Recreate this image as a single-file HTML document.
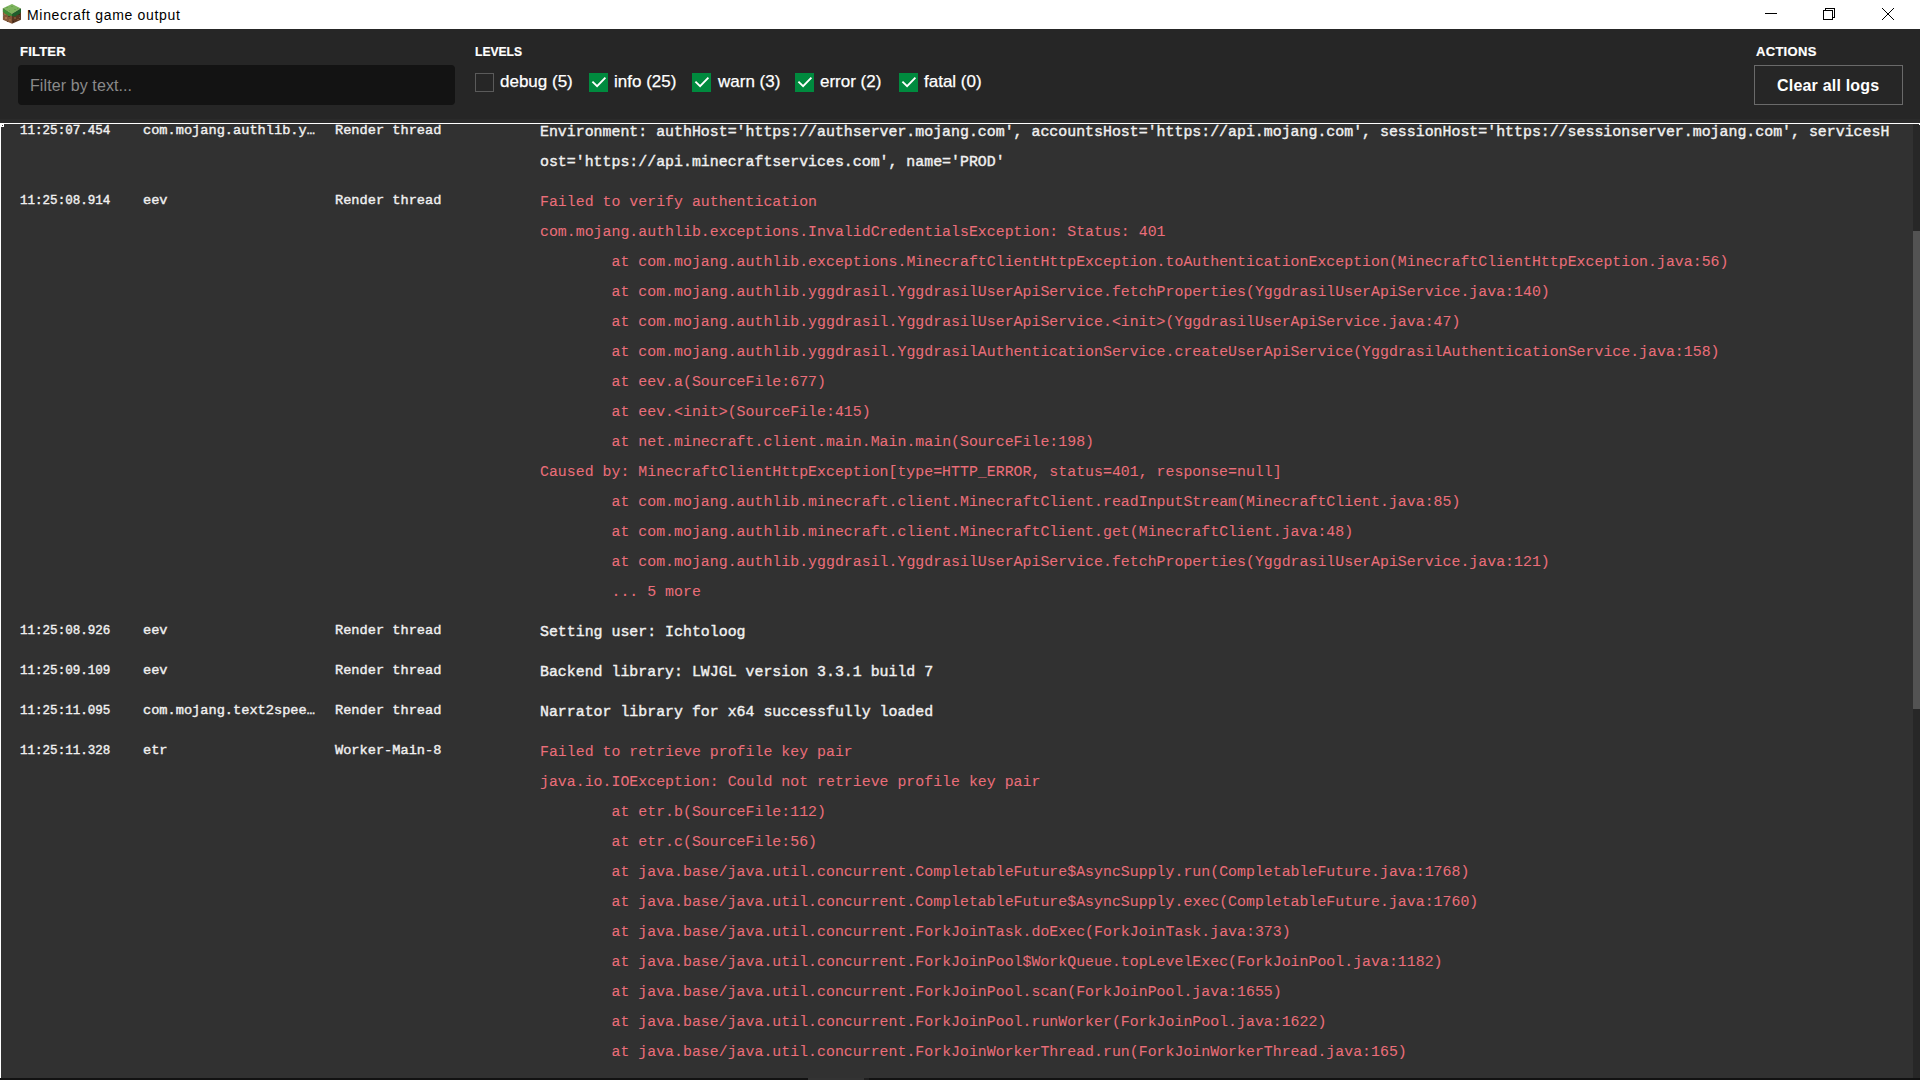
<!DOCTYPE html>
<html><head><meta charset="utf-8">
<style>
*{box-sizing:border-box}
html,body{margin:0;padding:0;width:1920px;height:1080px;overflow:hidden;background:#313131;font-family:"Liberation Sans",sans-serif}
#title{position:absolute;left:0;top:0;width:1920px;height:29px;background:#fff}
#title .t{position:absolute;left:27px;top:7px;font-size:14px;letter-spacing:0.68px;color:#000;white-space:nowrap}
#title svg{position:absolute}
#hdr{position:absolute;left:0;top:29px;width:1920px;height:94px;background:#262626}
.lbl{position:absolute;font-weight:bold;font-size:13px;color:#fff;white-space:nowrap;-webkit-text-stroke:0.2px #fff}
#inp{position:absolute;left:18px;top:36px;width:437px;height:40px;background:#131313;border-radius:4px}
#inp span{position:absolute;left:12px;top:12px;letter-spacing:0.1px;font-size:16px;color:#8a8a8a;white-space:nowrap}
.cb{position:absolute;top:44px;width:19px;height:19px;background:#008a3e}
.cb.off{background:transparent;border:1px solid #5a5a5a;width:19px;height:19px}
.cb svg{position:absolute;left:0;top:0}
.cbl{position:absolute;top:43px;font-size:17px;color:#fff;white-space:nowrap;-webkit-text-stroke:0.25px #fff}
#btn{position:absolute;left:1754px;top:36px;width:149px;height:40px;border:1px solid #6a6a6a}
#btn span{position:absolute;left:22px;top:11px;letter-spacing:0.2px;font-weight:bold;font-size:16px;color:#fff;white-space:nowrap}
#log{position:absolute;left:0;top:123px;width:1920px;height:955px;background:#313131;border-top:1px solid #fff;border-left:1px solid #fff;overflow:hidden}
#list{position:absolute;left:-1px;top:-12px;width:1913px}
.e{position:relative;padding:5px 0}
.c{position:absolute;top:5px;font-family:"Liberation Mono",monospace;-webkit-text-stroke:0.4px #f0f0f0;font-size:13.65px;line-height:27px;color:#f0f0f0;white-space:pre}
.ts{left:20px;top:6px;font-size:12.55px}.lg{left:143px}.th{left:335px}
.m{margin-left:540px;font-family:"Liberation Mono",monospace;font-size:14.9px;line-height:30px;white-space:pre;color:#f0f0f0;-webkit-text-stroke:0.4px #f0f0f0}
.m.r{color:#ea6e7a;-webkit-text-stroke:0.05px #ea6e7a}
#vs{position:absolute;left:1913px;top:124px;width:7px;height:954px;background:#272727}
#vt{position:absolute;left:1913px;top:231px;width:7px;height:478px;background:#535353}
#hs{position:absolute;left:0;top:1078px;width:1920px;height:2px;background:#121212}
#ht{position:absolute;left:808px;top:1078px;width:56px;height:2px;background:#333}
</style></head><body>
<div id="title">
<svg style="left:0;top:0" width="24" height="28" viewBox="0 0 24 28">
<defs><clipPath id="cl"><polygon points="2.9,8.2 12,14 12,23.7 2.9,19.8"/></clipPath><clipPath id="cr"><polygon points="21,8.4 12,14 12,23.7 21,19.8"/></clipPath><clipPath id="ct"><polygon points="12,4 21,8.4 12,14 2.9,8.2"/></clipPath></defs>
<polygon points="12,4 21,8.4 12,14 2.9,8.2" fill="#7db45e"/>
<polygon points="2.9,8.2 12,14 12,23.7 2.9,19.8" fill="#84583a"/>
<polygon points="21,8.4 12,14 12,23.7 21,19.8" fill="#5a3822"/>
<g clip-path="url(#ct)" fill="#6ba34e"><rect x="6" y="7" width="2" height="1"/><rect x="11" y="6" width="2" height="1"/><rect x="14" y="9" width="2" height="1"/><rect x="9" y="10" width="1" height="1"/><rect x="17" y="8" width="1" height="1"/></g>
<g clip-path="url(#cl)"><rect x="4" y="13" width="2" height="2" fill="#a06b44"/><rect x="8" y="16" width="2" height="1" fill="#5b3a22"/><rect x="5" y="17" width="2" height="2" fill="#a87350"/><rect x="9" y="19" width="2" height="2" fill="#9a6640"/><rect x="3" y="15" width="1" height="1" fill="#6b6b6b"/><rect x="7" y="21" width="1" height="1" fill="#5b3a22"/></g>
<g clip-path="url(#cr)"><rect x="14" y="17" width="2" height="2" fill="#7d5132"/><rect x="18" y="14" width="2" height="1" fill="#3d2414"/><rect x="17" y="19" width="2" height="1" fill="#7a4e30"/><rect x="13" y="21" width="1" height="1" fill="#3d2414"/><rect x="19" y="17" width="1" height="1" fill="#6b5a50"/></g>
<polygon points="2.9,8.2 12,14 12,16 10,15.5 9,16.5 7,14.5 5,14 4,12.5 2.9,12" fill="#3f8c37"/>
<polygon points="21,8.4 12,14 12,16.5 14,16 15,17 17,15 19,14.5 21,12" fill="#1f5f2c"/>
</svg>
<div class="t">Minecraft game output</div>
<svg style="left:1765px;top:13px" width="12" height="1"><rect width="12" height="1" fill="#000"/></svg>
<svg style="left:1823px;top:8px" width="13" height="13" viewBox="0 0 13 13" fill="none" stroke="#000" stroke-width="1" shape-rendering="crispEdges"><rect x="0.5" y="2.5" width="9" height="9"/><path d="M2.5 2.5V0.5h9v9h-2"/></svg>
<svg style="left:1882px;top:8px" width="12" height="12" viewBox="0 0 12 12"><path d="M0 0h1v1h-1zM1 1h1v1h-1zM2 2h1v1h-1zM3 3h1v1h-1zM4 4h1v1h-1zM5 5h1v1h-1zM6 6h1v1h-1zM7 7h1v1h-1zM8 8h1v1h-1zM9 9h1v1h-1zM10 10h1v1h-1zM11 11h1v1h-1zM11 0h1v1h-1zM10 1h1v1h-1zM9 2h1v1h-1zM8 3h1v1h-1zM7 4h1v1h-1zM6 5h1v1h-1zM5 6h1v1h-1zM4 7h1v1h-1zM3 8h1v1h-1zM2 9h1v1h-1zM1 10h1v1h-1zM0 11h1v1h-1z" fill="#000" shape-rendering="crispEdges"/></svg>
</div>
<div id="hdr">
<div style="position:absolute;left:0;top:90px;width:1920px;height:4px;background:#2a2a2a"></div>
<div class="lbl" style="left:20px;top:15px;letter-spacing:0.2px">FILTER</div>
<div id="inp"><span>Filter by text...</span></div>
<div class="lbl" style="left:475px;top:15px;transform:scaleX(0.93);transform-origin:0 0">LEVELS</div>
<div class="cb off" style="left:475px"></div><div class="cbl" style="left:500px">debug (5)</div>
<div class="cb" style="left:589px"><svg width="19" height="19" viewBox="0 0 19 19"><path d="M3.4 8.6L8.1 13.1L16.4 4.7" fill="none" stroke="#fff" stroke-width="1.9"/></svg></div><div class="cbl" style="left:614px">info (25)</div>
<div class="cb" style="left:692px"><svg width="19" height="19" viewBox="0 0 19 19"><path d="M3.4 8.6L8.1 13.1L16.4 4.7" fill="none" stroke="#fff" stroke-width="1.9"/></svg></div><div class="cbl" style="left:718px">warn (3)</div>
<div class="cb" style="left:795px"><svg width="19" height="19" viewBox="0 0 19 19"><path d="M3.4 8.6L8.1 13.1L16.4 4.7" fill="none" stroke="#fff" stroke-width="1.9"/></svg></div><div class="cbl" style="left:820px">error (2)</div>
<div class="cb" style="left:899px"><svg width="19" height="19" viewBox="0 0 19 19"><path d="M3.4 8.6L8.1 13.1L16.4 4.7" fill="none" stroke="#fff" stroke-width="1.9"/></svg></div><div class="cbl" style="left:924px">fatal (0)</div>
<div class="lbl" style="left:1756px;top:15px;letter-spacing:0.3px">ACTIONS</div>
<div id="btn"><span>Clear all logs</span></div>
</div>
<div id="log">
<div id="list">
<div class="e"><div class="c ts">11:25:07.454</div><div class="c lg">com.mojang.authlib.y…</div><div class="c th">Render thread</div><div class="m">Environment: authHost='https://authserver.mojang.com', accountsHost='https://api.mojang.com', sessionHost='https://sessionserver.mojang.com', servicesH
ost='https://api.minecraftservices.com', name='PROD'</div></div>
<div class="e"><div class="c ts">11:25:08.914</div><div class="c lg">eev</div><div class="c th">Render thread</div><div class="m r">Failed to verify authentication
com.mojang.authlib.exceptions.InvalidCredentialsException: Status: 401
	at com.mojang.authlib.exceptions.MinecraftClientHttpException.toAuthenticationException(MinecraftClientHttpException.java:56)
	at com.mojang.authlib.yggdrasil.YggdrasilUserApiService.fetchProperties(YggdrasilUserApiService.java:140)
	at com.mojang.authlib.yggdrasil.YggdrasilUserApiService.&lt;init&gt;(YggdrasilUserApiService.java:47)
	at com.mojang.authlib.yggdrasil.YggdrasilAuthenticationService.createUserApiService(YggdrasilAuthenticationService.java:158)
	at eev.a(SourceFile:677)
	at eev.&lt;init&gt;(SourceFile:415)
	at net.minecraft.client.main.Main.main(SourceFile:198)
Caused by: MinecraftClientHttpException[type=HTTP_ERROR, status=401, response=null]
	at com.mojang.authlib.minecraft.client.MinecraftClient.readInputStream(MinecraftClient.java:85)
	at com.mojang.authlib.minecraft.client.MinecraftClient.get(MinecraftClient.java:48)
	at com.mojang.authlib.yggdrasil.YggdrasilUserApiService.fetchProperties(YggdrasilUserApiService.java:121)
	... 5 more</div></div>
<div class="e"><div class="c ts">11:25:08.926</div><div class="c lg">eev</div><div class="c th">Render thread</div><div class="m">Setting user: Ichtoloog</div></div>
<div class="e"><div class="c ts">11:25:09.109</div><div class="c lg">eev</div><div class="c th">Render thread</div><div class="m">Backend library: LWJGL version 3.3.1 build 7</div></div>
<div class="e"><div class="c ts">11:25:11.095</div><div class="c lg">com.mojang.text2spee…</div><div class="c th">Render thread</div><div class="m">Narrator library for x64 successfully loaded</div></div>
<div class="e"><div class="c ts">11:25:11.328</div><div class="c lg">etr</div><div class="c th">Worker-Main-8</div><div class="m r">Failed to retrieve profile key pair
java.io.IOException: Could not retrieve profile key pair
	at etr.b(SourceFile:112)
	at etr.c(SourceFile:56)
	at java.base/java.util.concurrent.CompletableFuture$AsyncSupply.run(CompletableFuture.java:1768)
	at java.base/java.util.concurrent.CompletableFuture$AsyncSupply.exec(CompletableFuture.java:1760)
	at java.base/java.util.concurrent.ForkJoinTask.doExec(ForkJoinTask.java:373)
	at java.base/java.util.concurrent.ForkJoinPool$WorkQueue.topLevelExec(ForkJoinPool.java:1182)
	at java.base/java.util.concurrent.ForkJoinPool.scan(ForkJoinPool.java:1655)
	at java.base/java.util.concurrent.ForkJoinPool.runWorker(ForkJoinPool.java:1622)
	at java.base/java.util.concurrent.ForkJoinWorkerThread.run(ForkJoinWorkerThread.java:165)</div></div>
</div>
</div>
<div id="vs"></div><div id="vt"></div>
<div id="hs"></div><div id="ht"></div><div style="position:absolute;left:864px;top:1078px;width:5px;height:2px;background:#1f1f1f"></div>
<div style="position:absolute;left:0;top:124px;width:4px;height:3px;background:#fff"></div><div style="position:absolute;left:1919px;top:124px;width:1px;height:1px;background:#fff"></div><div style="position:absolute;left:2px;top:125px;width:1px;height:1px;background:#333"></div>
</body></html>
